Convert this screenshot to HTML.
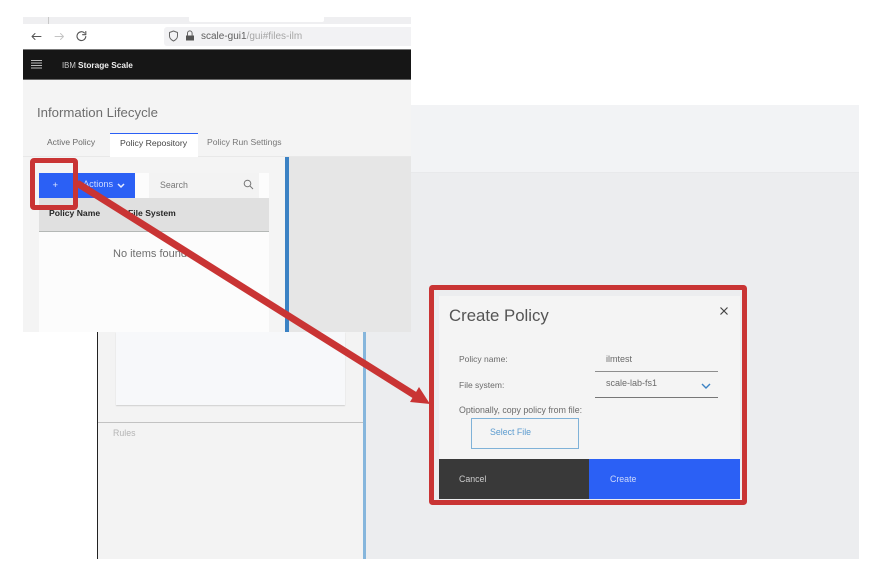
<!DOCTYPE html>
<html><head><meta charset="utf-8">
<style>
html,body{margin:0;padding:0;background:#fff}
body{width:872px;height:574px;position:relative;overflow:hidden;font-family:"Liberation Sans",sans-serif}
.b{position:absolute}
.t{position:absolute;white-space:nowrap;line-height:14px;filter:blur(.3px)}
</style></head><body>
<!-- back screenshot -->
<div class="b" style="left:411px;top:105px;width:448px;height:67px;background:#f2f3f5"></div>
<div class="b" style="left:411px;top:172px;width:448px;height:387px;background:#ecedef;box-shadow:inset 0 1px 0 #e8e9eb"></div>
<div class="b" style="left:97px;top:332px;width:1px;height:227px;background:#222"></div>
<div class="b" style="left:98px;top:332px;width:265px;height:227px;background:#f3f3f3"></div>
<div class="b" style="left:363px;top:332px;width:3px;height:227px;background:#86b6dc"></div>
<div class="b" style="left:366px;top:332px;width:63px;height:227px;background:#ecedef"></div>
<div class="b" style="left:116px;top:332px;width:229px;height:73px;background:#f7f8fa;box-shadow:0 1px 1px #cfcfcf"></div>
<div class="b" style="left:98px;top:422px;width:265px;height:1px;background:#c2c2c2"></div>
<div class="t" style="left:113px;top:426px;font-size:8.800px;color:#b4b4b4">Rules</div>
<!-- front screenshot -->
<div class="b" style="left:23px;top:17px;width:388px;height:315px;background:#f4f4f4"></div>
<div class="b" style="left:23px;top:17px;width:388px;height:7px;background:#efeff1"></div>
<div class="b" style="left:48px;top:17px;width:1px;height:7px;background:#c8c8c8"></div>
<div class="b" style="left:189px;top:17px;width:135px;height:5px;background:#fff;border-radius:0 0 2px 2px"></div>
<div class="b" style="left:23px;top:24px;width:388px;height:25px;background:#fff"></div>
<div class="b" style="left:164px;top:27px;width:247px;height:19px;background:#f2f2f4;border-radius:3px 0 0 3px"></div>
<svg class="b" style="left:23px;top:24px" width="175" height="25" fill="none" stroke-linecap="round" stroke-linejoin="round">
<path d="M9 12.500h9M12 9.500l-3 3 3 3" stroke="#555" stroke-width="1"/>
<path d="M32 12.500h8.500M37.500 9.500l3 3-3 3" stroke="#c4c4c4" stroke-width=".9"/>
<path d="M61.500 9a4.400 4.400 0 1 0 1.300 3.500M62.800 7.500v3.200h-3.200" stroke="#555" stroke-width="1.100"/>
<path d="M146.500 8.500l4-1.500 4 1.500v3.500c0 2.500-2 4-4 5-2-1-4-2.500-4-5z" stroke="#666" stroke-width="1"/>
<rect x="163" y="11.500" width="8" height="5" fill="#555"/><path d="M164.500 11.500v-2.300a2.300 2.300 0 0 1 4.600 0v2.300" stroke="#666" stroke-width="1"/>
</svg>
<div class="t" style="left:201px;top:30px;font-size:10px;color:#5f5f5f">scale-gui1<span style="color:#a6a6a6">/gui#files-ilm</span></div>
<div class="b" style="left:23px;top:49px;width:388px;height:1px;background:#777"></div>
<div class="b" style="left:23px;top:50px;width:388px;height:29px;background:#161616"></div>
<div class="b" style="left:23px;top:79px;width:388px;height:1px;background:#666"></div>
<div class="b" style="left:31px;top:59.500px;width:11px;height:1px;background:#bbb;box-shadow:0 2.500px 0 #bbb,0 5px 0 #bbb,0 7.500px 0 #bbb"></div>
<div class="t" style="left:62px;top:58px;font-size:7.800px;color:#ccc">IBM <b style="color:#eee;font-size:8.300px">Storage Scale</b></div>
<div class="t" style="left:37px;top:106px;font-size:13.200px;color:#6d6d6d">Information Lifecycle</div>
<div class="b" style="left:23px;top:156px;width:388px;height:1px;background:#e8e8e8"></div>
<div class="b" style="left:110px;top:133px;width:88px;height:24px;background:#fff;border-top:1px solid #2b60f5;box-sizing:border-box"></div>
<div class="t" style="left:47px;top:135px;font-size:8.500px;color:#6a6a6a">Active Policy</div>
<div class="t" style="left:120px;top:136px;font-size:8.700px;color:#444">Policy Repository</div>
<div class="t" style="left:207px;top:135px;font-size:8.600px;color:#777">Policy Run Settings</div>
<div class="b" style="left:285px;top:157px;width:4px;height:175px;background:#3b82c4"></div>
<div class="b" style="left:289px;top:157px;width:122px;height:175px;background:#e6e6e6"></div>
<!-- card -->
<div class="b" style="left:39px;top:173px;width:230px;height:159px;background:#fcfcfc"></div>
<div class="b" style="left:39px;top:173px;width:96px;height:25px;background:#2b60f5"></div>
<div class="b" style="left:149px;top:173px;width:110px;height:25px;background:#f3f3f3"></div>
<div class="t" style="left:52.500px;top:178.500px;font-size:9.500px;color:#dfe7ff">+</div>
<div class="t" style="left:83px;top:177px;font-size:9.200px;color:#cddaff">Actions</div>
<svg class="b" style="left:115px;top:181px" width="12" height="10" fill="none"><path d="M3 3l3 3 3-3" stroke="#e8eeff" stroke-width="1.500"/></svg>
<div class="t" style="left:160px;top:178px;font-size:8.800px;color:#777">Search</div>
<svg class="b" style="left:242px;top:178px" width="12" height="12" fill="none" stroke="#777"><circle cx="5.500" cy="5.500" r="3.300"/><path d="M8 8l3 3"/></svg>
<div class="b" style="left:39px;top:198px;width:230px;height:33px;background:#e0e0e0"></div>
<div class="b" style="left:39px;top:231px;width:230px;height:1px;background:#b4b8b6"></div>
<div class="t" style="left:49px;top:206px;font-size:8.600px;font-weight:bold;color:#262626">Policy Name</div>
<div class="t" style="left:128px;top:206px;font-size:8.600px;font-weight:bold;color:#262626">File System</div>
<div class="t" style="left:113px;top:247px;font-size:11px;color:#6f6f6f">No items found!</div>
<!-- dialog -->
<div class="b" style="left:439px;top:296px;width:301px;height:163px;background:#f4f4f4"></div>
<div class="b" style="left:439px;top:459px;width:150px;height:40px;background:#393939"></div>
<div class="b" style="left:589px;top:459px;width:151px;height:40px;background:#2b60f5"></div>
<div class="t" style="left:449px;top:306px;font-size:16.800px;line-height:19px;color:#555">Create Policy</div>
<svg class="b" style="left:718px;top:305px" width="12" height="12" fill="none"><path d="M2.500 2.500l7 7M9.500 2.500l-7 7" stroke="#444" stroke-width="1.200"/></svg>
<div class="t" style="left:459px;top:352px;font-size:8.500px;color:#6a6a6a">Policy name:</div>
<div class="t" style="left:606px;top:352px;font-size:9px;color:#6a6a6a">ilmtest</div>
<div class="b" style="left:595px;top:371px;width:123px;height:1px;background:#8e8e8e"></div>
<div class="t" style="left:459px;top:378px;font-size:8.500px;color:#6a6a6a">File system:</div>
<div class="t" style="left:606px;top:376px;font-size:9px;color:#6a6a6a">scale-lab-fs1</div>
<svg class="b" style="left:700px;top:381px" width="12" height="10" fill="none"><path d="M2 3l4 4 4-4" stroke="#3b82c4" stroke-width="1.400"/></svg>
<div class="b" style="left:595px;top:397px;width:123px;height:1px;background:#777"></div>
<div class="t" style="left:459px;top:403px;font-size:8.800px;color:#6a6a6a">Optionally, copy policy from file:</div>
<div class="b" style="left:471px;top:418px;width:108px;height:31px;box-sizing:border-box;border:1px solid #7fb2d8"></div>
<div class="t" style="left:490px;top:425px;font-size:8.800px;color:#5b9bcf">Select File</div>
<div class="t" style="left:459px;top:472px;font-size:8.800px;color:#ccc">Cancel</div>
<div class="t" style="left:610px;top:472px;font-size:8.800px;color:#cdd9fb">Create</div>
<!-- annotations -->
<svg class="b" style="left:0;top:0" width="872" height="574" fill="none">
<path d="M77 183L416 396" stroke="#c93434" stroke-width="7"/>
<path d="M430 404L410 402L419 387Z" fill="#c93434"/>
<rect x="32.500" y="160.500" width="43" height="47" rx="1.500" stroke="#c93434" stroke-width="5"/>
<rect x="431.500" y="287.500" width="313" height="215" rx="1" stroke="#c93434" stroke-width="5"/>
</svg>
</body></html>
